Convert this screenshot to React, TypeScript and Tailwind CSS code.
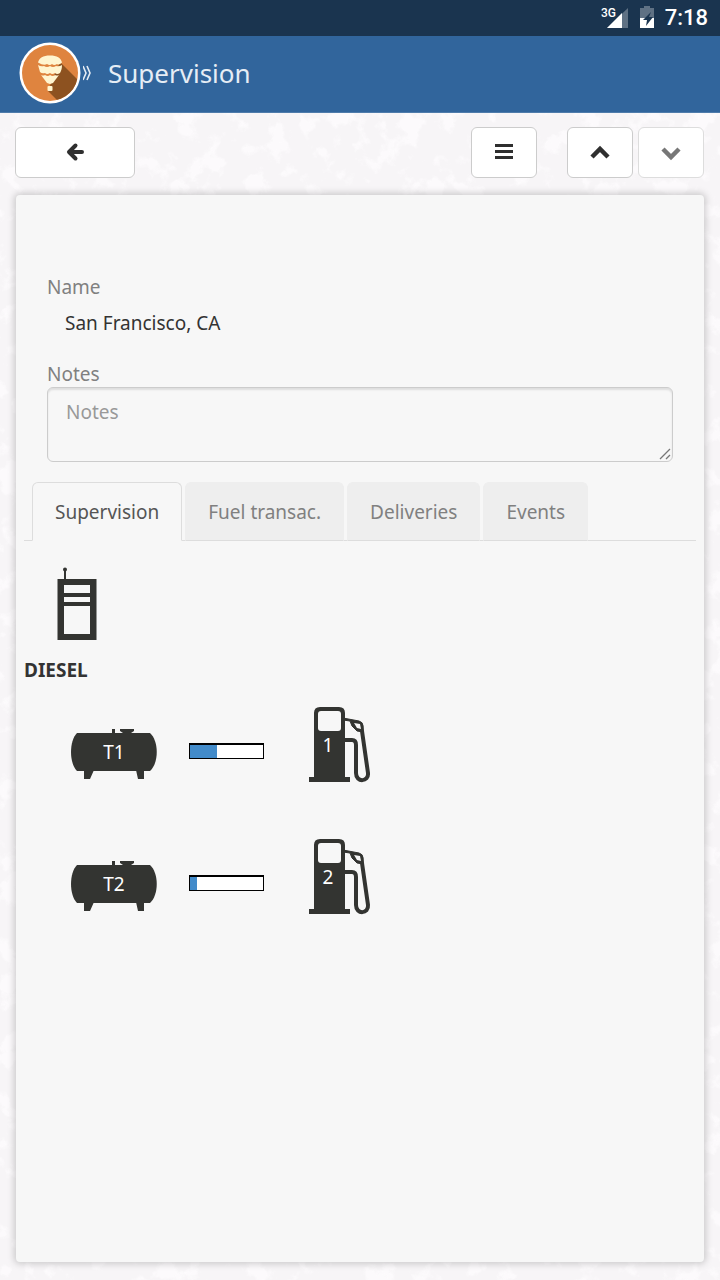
import { useState } from "react";
import type { FC, ReactNode } from "react";

type Tank = { id: string; level: number; pump: number };

const tabs = ["Supervision", "Fuel transac.", "Deliveries", "Events"];

const tanks: Tank[] = [
  { id: "T1", level: 37, pump: 1 },
  { id: "T2", level: 9, pump: 2 },
];

const PaperTexture: FC = () => (
  <svg className="absolute inset-0 h-full w-full opacity-70" aria-hidden="true">
    <filter id="paper" x="0" y="0" width="100%" height="100%">
      <feTurbulence type="fractalNoise" baseFrequency="0.045" numOctaves="6" seed="21" />
      <feColorMatrix values="0 0 0 0 1  0 0 0 0 0.985  0 0 0 0 1  7 0 0 0 -3.7" />
    </filter>
    <rect width="100%" height="100%" filter="url(#paper)" />
  </svg>
);

const StatusBar: FC = () => (
  <div className="flex h-9 items-center justify-end bg-[#1a344f] pr-3 text-white">
    <svg className="h-6 w-7" viewBox="0 0 28 24" aria-hidden="true">
      <path d="M27 2v20H6z" fill="#5f7184" />
      <path d="M21 7v15H6z" fill="#fff" />
      <path d="M0 0h15v10l-3 3H0z" fill="#1a344f" />
      <text x="0" y="11" fill="#fff" fontSize="12" fontWeight="500" fontFamily="Roboto, sans-serif">3G</text>
    </svg>
    <svg className="ml-2.5 h-6 w-4" viewBox="0 0 16 24" aria-hidden="true">
      <path d="M5 0h6v2h4v20H1V2h4z" fill="#5f7184" />
      <path d="M1 12h14v10H1z" fill="#fff" />
      <path d="M12 6 4 14h4l-1 6 7-9h-4z" fill="#1a344f" />
    </svg>
    <time className="ml-2.5 font-[Roboto,sans-serif] text-[22px] leading-6 font-medium">7:18</time>
  </div>
);

const Logo: FC = () => (
  <svg className="h-[62px] w-[62px]" viewBox="0 0 62 62" aria-hidden="true">
    <defs>
      <clipPath id="disc">
        <circle cx="31" cy="31" r="28" />
      </clipPath>
    </defs>
    <circle cx="31" cy="31" r="30.5" fill="#fff" />
    <circle cx="31" cy="31" r="28" fill="#df843f" />
    <path clipPath="url(#disc)" d="M41 20 62 41v21H42L29 49l3-8z" fill="#8d5220" />
    <path d="M19 20.500c1-4.500 5-7 12-7s11 2.500 12 7q-3 3-5 1.500-3 2-5 0-2 2-5 0-3 2-9-1.500z" fill="#fff5d0" />
    <path d="M19 23q3 2 6 1 3 2 6 0 3 2 6 0 3 1 6-1c0 4-1 6-2 8q-3 2-5 0-3 2-5 0-3 2-5 0-3 1-5-1z" fill="#fff5d0" />
    <path d="M22 33q2 1 4 0 3 2 5 0 3 2 5 0 2 1 4 0l-6 8-3 1-3-1z" fill="#fff5d0" />
    <rect x="28.500" y="44" width="5" height="5" rx="1" fill="#fff5d0" />
  </svg>
);

const Header: FC = () => (
  <header className="flex h-[77px] items-center border-b border-[#4f7cab] bg-[#31659c] pb-0.5 pl-[19px] text-[#e6edf5]">
    <Logo />
    <svg className="ml-0.5 h-4 w-2" viewBox="0 0 8 16" fill="none" stroke="currentColor" strokeWidth="1.6" aria-hidden="true">
      <path d="m0 1 3 7-3 7M4 1l3 7-3 7" />
    </svg>
    <h1 className="ml-[17px] text-[26px] leading-9">Supervision</h1>
  </header>
);

type ToolButtonProps = { label: string; className: string; disabled?: boolean; children: ReactNode };

const ToolButton: FC<ToolButtonProps> = ({ label, className, disabled, children }) => (
  <button
    type="button"
    aria-label={label}
    disabled={disabled}
    className={`flex h-[51px] items-center justify-center rounded-md border border-[#ccc] bg-white text-[#2f2f2f] disabled:border-[#ddd] disabled:text-[#777] ${className}`}
  >
    <svg className="h-6 w-6" viewBox="0 0 24 24" fill="none" stroke="currentColor" strokeWidth="4" aria-hidden="true">
      {children}
    </svg>
  </button>
);

const Toolbar: FC = () => (
  <nav className="flex px-[15px] pt-3.5 pb-[17px]" aria-label="Record">
    <ToolButton label="Back" className="w-[120px]">
      <path d="M12.500 4.500 6 11l6.500 6.500M7 11h12" strokeLinecap="round" strokeLinejoin="round" />
    </ToolButton>
    <div className="ml-auto flex pr-px">
      <ToolButton label="Menu" className="w-[66px]">
        <path d="M3 4.500h18M3 10.500h18M3 16.500h18" strokeWidth="3" />
      </ToolButton>
      <ToolButton label="Previous" className="ml-[30px] w-[66px]">
        <path d="m4 16 8-8 8 8" strokeWidth="4.500" />
      </ToolButton>
      <ToolButton label="Next" className="ml-[5px] w-[66px]" disabled>
        <path d="m4 8 8 8 8-8" strokeWidth="4.500" />
      </ToolButton>
    </div>
  </nav>
);

const SiteIcon: FC = () => (
  <svg className="h-[74px] w-10" viewBox="0 0 40 74" role="img" aria-label="Site controller">
    <circle cx="8" cy="2.500" r="2" fill="#333431" />
    <path d="M7 2h2v10H7z" fill="#333431" />
    <path d="M.500 12h39v61H.500z" fill="#333431" />
    <path d="M7 18h26v8H7zM7 30h26v5H7zM7 39h26v28H7z" fill="#f7f7f7" />
  </svg>
);

const TankIcon: FC<{ id: string }> = ({ id }) => (
  <div className="relative h-[52px] w-[86px]">
    <svg className="h-full w-full" viewBox="0 0 86 52" fill="#333431" aria-hidden="true">
      <path d="M6 5h73c9 8 9 30 0 38H6c-8-8-8-30 0-38z" />
      <path d="M41 1h3v5h-3zM49 1h14v2l-3 2v1h-8V5l-3-2zM13 42h10l-4 9h-6zM65 42h8v9h-6z" />
    </svg>
    <span className="absolute inset-x-0 top-3 text-center text-[19px] leading-6 text-white">{id}</span>
  </div>
);

const PumpIcon: FC<{ pump: number }> = ({ pump }) => (
  <div className="relative h-[76px] w-[62px]">
    <svg className="h-full w-full" viewBox="0 0 62 76" fill="none" stroke="#333431" aria-hidden="true">
      <path d="M11 0h19q6 0 6 6v64h5v5H0v-5h5V6q0-6 6-6z" fill="#333431" stroke="none" />
      <rect x="9" y="4" width="23" height="20" rx="3" fill="#f7f7f7" stroke="none" />
      <path d="M35 33h8q4 0 4 5v28c0 10 13 9 12 0L52 17" strokeWidth="4" />
      <path d="M34 11 50 14q4 1 4 5v6l-6-1-5-5-2-5-7-1z" fill="#333431" stroke="#333431" strokeLinejoin="round" />
      <path d="m45 16 6 1 1 5-4-1z" fill="#f7f7f7" stroke="none" />
    </svg>
    <span className="absolute top-6 left-0 w-[38px] text-center text-[19px] leading-7 text-white">{pump}</span>
  </div>
);

const TankRow: FC<{ tank: Tank }> = ({ tank }) => (
  <li className="flex h-[132px] items-start pl-[47px]">
    <div className="pt-[21px]">
      <TankIcon id={tank.id} />
    </div>
    <div
      role="meter"
      aria-label={`${tank.id} level`}
      aria-valuenow={tank.level}
      className="mt-9 ml-8 h-4 w-[75px] border-x border-t-2 border-b border-black bg-white"
    >
      <div className="h-full bg-[#428bca]" style={{ width: `${tank.level}%` }} />
    </div>
    <div className="ml-[45px]">
      <PumpIcon pump={tank.pump} />
    </div>
  </li>
);

export default function App() {
  const [active, setActive] = useState("Supervision");

  return (
    <div className="relative flex min-h-screen flex-col bg-[#f7f5f7] font-['Noto_Sans',sans-serif] text-[#333]">
      <PaperTexture />
      <div className="relative flex flex-1 flex-col">
        <StatusBar />
        <Header />
        <Toolbar />

        <main className="mx-4 mb-[18px] flex-1 rounded-sm bg-[#f7f7f7] px-2 pt-[78px] shadow-[0_0_7px_2px_rgba(0,0,0,0.18)]">
          <div className="px-[23px]">
            <p className="text-[19px] leading-7 text-[#808080]">Name</p>
            <p className="mt-2 pl-[18px] text-[19px] leading-7">San Francisco, CA</p>
            <label htmlFor="notes" className="mt-[23px] block text-[19px] leading-7 text-[#808080]">Notes</label>
            <div className="relative -mt-px">
              <textarea
                id="notes"
                placeholder="Notes"
                className="block h-[75px] w-full resize-y rounded-md border border-[#ccc] bg-transparent px-[18px] py-2.5 text-[19px] leading-7 shadow-[inset_0_2px_2px_rgba(0,0,0,0.1)] placeholder:text-[#999] [&::-webkit-resizer]:bg-transparent"
              />
              <svg className="pointer-events-none absolute right-0.5 bottom-0.5 h-3 w-3" viewBox="0 0 12 12" fill="none" stroke="#777" strokeWidth="1.3" aria-hidden="true">
                <path d="M1 11 11 1M7 11l4-4" />
              </svg>
            </div>
          </div>

          <div role="tablist" className="mt-5 flex gap-[3px] border-b border-[#ddd] pl-2">
            {tabs.map((tab) => (
              <button
                key={tab}
                type="button"
                role="tab"
                aria-selected={tab === active}
                onClick={() => setActive(tab)}
                className={`-mb-px h-[59px] rounded-t-md border px-[22px] text-[19px] leading-7 ${
                  tab === active
                    ? "border-[#ddd] border-b-[#f7f7f7] bg-[#f7f7f7] text-[#555]"
                    : "border-[#eee] border-b-[#ddd] bg-[#eee] text-[#808080]"
                }`}
              >
                {tab}
              </button>
            ))}
          </div>

          <section className="pt-[26px]">
            <div className="pl-[33px]">
              <SiteIcon />
            </div>
            <h2 className="mt-[15px] text-[19px] leading-7 font-bold">DIESEL</h2>
            <ul className="mt-[23px]">
              {tanks.map((tank) => (
                <TankRow key={tank.id} tank={tank} />
              ))}
            </ul>
          </section>
        </main>
      </div>
    </div>
  );
}
